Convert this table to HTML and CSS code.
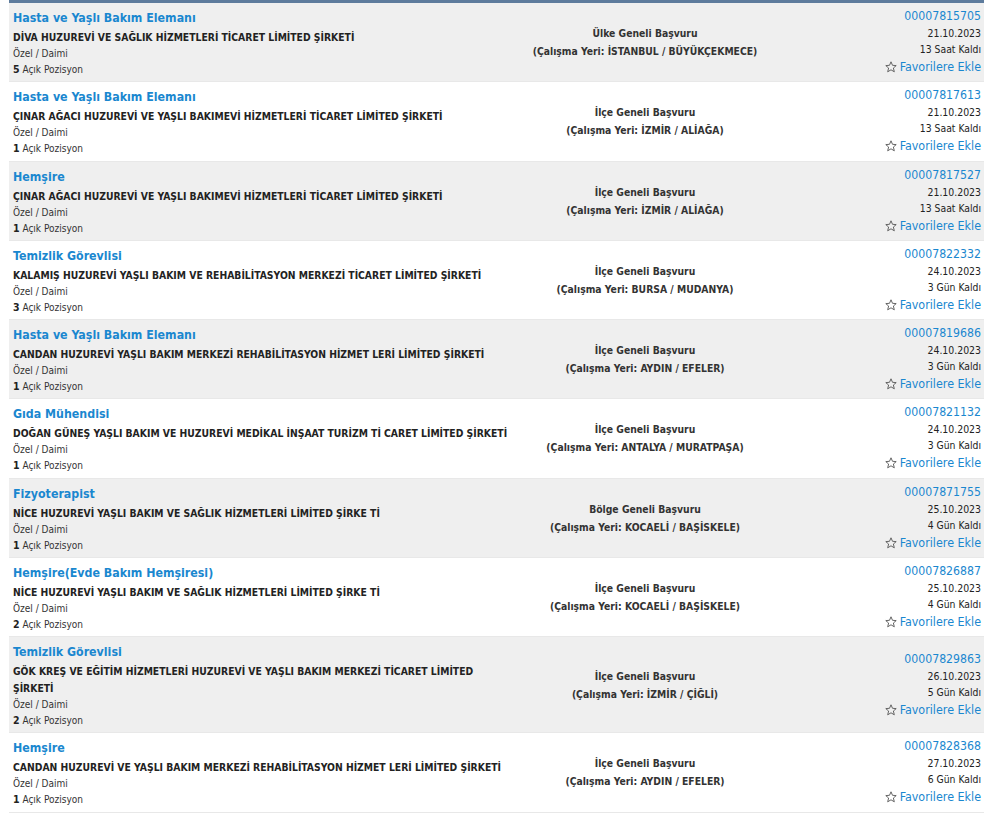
FILE: index.html
```html
<!DOCTYPE html>
<html lang="tr">
<head>
<meta charset="utf-8">
<title>İlanlar</title>
<link rel="stylesheet" href="styles.css">
</head>
<body>
<div class="list">
  <div class="row odd">
    <div class="c-left">
      <a class="title">Hasta ve Yaşlı Bakım Elemanı</a>
      <div class="company">DİVA HUZUREVİ VE SAĞLIK HİZMETLERİ TİCARET LİMİTED ŞİRKETİ</div>
      <div class="type">Özel / Daimi</div>
      <div class="pos"><b>5</b> Açık Pozisyon</div>
    </div>
    <div class="c-mid"><div>Ülke Geneli Başvuru</div><div>(Çalışma Yeri: İSTANBUL / BÜYÜKÇEKMECE)</div></div>
    <div class="c-right">
      <a class="no">00007815705</a>
      <div class="date">21.10.2023</div>
      <div class="left">13 Saat Kaldı</div>
      <a class="fav"><svg viewBox="0 0 12 12" class="star"><path d="M6 0.8 L7.5 4.3 L11.2 4.6 L8.4 7 L9.3 10.8 L6 8.8 L2.7 10.8 L3.6 7 L0.8 4.6 L4.5 4.3 Z"/></svg>Favorilere Ekle</a>
    </div>
  </div>
  <div class="row">
    <div class="c-left">
      <a class="title">Hasta ve Yaşlı Bakım Elemanı</a>
      <div class="company">ÇINAR AĞACI HUZUREVİ VE YAŞLI BAKIMEVİ HİZMETLERİ TİCARET LİMİTED ŞİRKETİ</div>
      <div class="type">Özel / Daimi</div>
      <div class="pos"><b>1</b> Açık Pozisyon</div>
    </div>
    <div class="c-mid"><div>İlçe Geneli Başvuru</div><div>(Çalışma Yeri: İZMİR / ALİAĞA)</div></div>
    <div class="c-right">
      <a class="no">00007817613</a>
      <div class="date">21.10.2023</div>
      <div class="left">13 Saat Kaldı</div>
      <a class="fav"><svg viewBox="0 0 12 12" class="star"><path d="M6 0.8 L7.5 4.3 L11.2 4.6 L8.4 7 L9.3 10.8 L6 8.8 L2.7 10.8 L3.6 7 L0.8 4.6 L4.5 4.3 Z"/></svg>Favorilere Ekle</a>
    </div>
  </div>
  <div class="row odd">
    <div class="c-left">
      <a class="title">Hemşire</a>
      <div class="company">ÇINAR AĞACI HUZUREVİ VE YAŞLI BAKIMEVİ HİZMETLERİ TİCARET LİMİTED ŞİRKETİ</div>
      <div class="type">Özel / Daimi</div>
      <div class="pos"><b>1</b> Açık Pozisyon</div>
    </div>
    <div class="c-mid"><div>İlçe Geneli Başvuru</div><div>(Çalışma Yeri: İZMİR / ALİAĞA)</div></div>
    <div class="c-right">
      <a class="no">00007817527</a>
      <div class="date">21.10.2023</div>
      <div class="left">13 Saat Kaldı</div>
      <a class="fav"><svg viewBox="0 0 12 12" class="star"><path d="M6 0.8 L7.5 4.3 L11.2 4.6 L8.4 7 L9.3 10.8 L6 8.8 L2.7 10.8 L3.6 7 L0.8 4.6 L4.5 4.3 Z"/></svg>Favorilere Ekle</a>
    </div>
  </div>
  <div class="row">
    <div class="c-left">
      <a class="title">Temizlik Görevlisi</a>
      <div class="company">KALAMIŞ HUZUREVİ YAŞLI BAKIM VE REHABİLİTASYON MERKEZİ TİCARET LİMİTED ŞİRKETİ</div>
      <div class="type">Özel / Daimi</div>
      <div class="pos"><b>3</b> Açık Pozisyon</div>
    </div>
    <div class="c-mid"><div>İlçe Geneli Başvuru</div><div>(Çalışma Yeri: BURSA / MUDANYA)</div></div>
    <div class="c-right">
      <a class="no">00007822332</a>
      <div class="date">24.10.2023</div>
      <div class="left">3 Gün Kaldı</div>
      <a class="fav"><svg viewBox="0 0 12 12" class="star"><path d="M6 0.8 L7.5 4.3 L11.2 4.6 L8.4 7 L9.3 10.8 L6 8.8 L2.7 10.8 L3.6 7 L0.8 4.6 L4.5 4.3 Z"/></svg>Favorilere Ekle</a>
    </div>
  </div>
  <div class="row odd">
    <div class="c-left">
      <a class="title">Hasta ve Yaşlı Bakım Elemanı</a>
      <div class="company">CANDAN HUZUREVİ YAŞLI BAKIM MERKEZİ REHABİLİTASYON HİZMET LERİ LİMİTED ŞİRKETİ</div>
      <div class="type">Özel / Daimi</div>
      <div class="pos"><b>1</b> Açık Pozisyon</div>
    </div>
    <div class="c-mid"><div>İlçe Geneli Başvuru</div><div>(Çalışma Yeri: AYDIN / EFELER)</div></div>
    <div class="c-right">
      <a class="no">00007819686</a>
      <div class="date">24.10.2023</div>
      <div class="left">3 Gün Kaldı</div>
      <a class="fav"><svg viewBox="0 0 12 12" class="star"><path d="M6 0.8 L7.5 4.3 L11.2 4.6 L8.4 7 L9.3 10.8 L6 8.8 L2.7 10.8 L3.6 7 L0.8 4.6 L4.5 4.3 Z"/></svg>Favorilere Ekle</a>
    </div>
  </div>
  <div class="row">
    <div class="c-left">
      <a class="title">Gıda Mühendisi</a>
      <div class="company">DOĞAN GÜNEŞ YAŞLI BAKIM VE HUZUREVİ MEDİKAL İNŞAAT TURİZM Tİ CARET LİMİTED ŞİRKETİ</div>
      <div class="type">Özel / Daimi</div>
      <div class="pos"><b>1</b> Açık Pozisyon</div>
    </div>
    <div class="c-mid"><div>İlçe Geneli Başvuru</div><div>(Çalışma Yeri: ANTALYA / MURATPAŞA)</div></div>
    <div class="c-right">
      <a class="no">00007821132</a>
      <div class="date">24.10.2023</div>
      <div class="left">3 Gün Kaldı</div>
      <a class="fav"><svg viewBox="0 0 12 12" class="star"><path d="M6 0.8 L7.5 4.3 L11.2 4.6 L8.4 7 L9.3 10.8 L6 8.8 L2.7 10.8 L3.6 7 L0.8 4.6 L4.5 4.3 Z"/></svg>Favorilere Ekle</a>
    </div>
  </div>
  <div class="row odd">
    <div class="c-left">
      <a class="title">Fizyoterapist</a>
      <div class="company">NİCE HUZUREVİ YAŞLI BAKIM VE SAĞLIK HİZMETLERİ LİMİTED ŞİRKE Tİ</div>
      <div class="type">Özel / Daimi</div>
      <div class="pos"><b>1</b> Açık Pozisyon</div>
    </div>
    <div class="c-mid"><div>Bölge Geneli Başvuru</div><div>(Çalışma Yeri: KOCAELİ / BAŞİSKELE)</div></div>
    <div class="c-right">
      <a class="no">00007871755</a>
      <div class="date">25.10.2023</div>
      <div class="left">4 Gün Kaldı</div>
      <a class="fav"><svg viewBox="0 0 12 12" class="star"><path d="M6 0.8 L7.5 4.3 L11.2 4.6 L8.4 7 L9.3 10.8 L6 8.8 L2.7 10.8 L3.6 7 L0.8 4.6 L4.5 4.3 Z"/></svg>Favorilere Ekle</a>
    </div>
  </div>
  <div class="row">
    <div class="c-left">
      <a class="title">Hemşire(Evde Bakım Hemşiresi)</a>
      <div class="company">NİCE HUZUREVİ YAŞLI BAKIM VE SAĞLIK HİZMETLERİ LİMİTED ŞİRKE Tİ</div>
      <div class="type">Özel / Daimi</div>
      <div class="pos"><b>2</b> Açık Pozisyon</div>
    </div>
    <div class="c-mid"><div>İlçe Geneli Başvuru</div><div>(Çalışma Yeri: KOCAELİ / BAŞİSKELE)</div></div>
    <div class="c-right">
      <a class="no">00007826887</a>
      <div class="date">25.10.2023</div>
      <div class="left">4 Gün Kaldı</div>
      <a class="fav"><svg viewBox="0 0 12 12" class="star"><path d="M6 0.8 L7.5 4.3 L11.2 4.6 L8.4 7 L9.3 10.8 L6 8.8 L2.7 10.8 L3.6 7 L0.8 4.6 L4.5 4.3 Z"/></svg>Favorilere Ekle</a>
    </div>
  </div>
  <div class="row odd">
    <div class="c-left">
      <a class="title">Temizlik Görevlisi</a>
      <div class="company">GÖK KREŞ VE EĞİTİM HİZMETLERİ HUZUREVİ VE YAŞLI BAKIM MERKEZİ TİCARET LİMİTED ŞİRKETİ</div>
      <div class="type">Özel / Daimi</div>
      <div class="pos"><b>2</b> Açık Pozisyon</div>
    </div>
    <div class="c-mid"><div>İlçe Geneli Başvuru</div><div>(Çalışma Yeri: İZMİR / ÇİĞLİ)</div></div>
    <div class="c-right">
      <a class="no">00007829863</a>
      <div class="date">26.10.2023</div>
      <div class="left">5 Gün Kaldı</div>
      <a class="fav"><svg viewBox="0 0 12 12" class="star"><path d="M6 0.8 L7.5 4.3 L11.2 4.6 L8.4 7 L9.3 10.8 L6 8.8 L2.7 10.8 L3.6 7 L0.8 4.6 L4.5 4.3 Z"/></svg>Favorilere Ekle</a>
    </div>
  </div>
  <div class="row">
    <div class="c-left">
      <a class="title">Hemşire</a>
      <div class="company">CANDAN HUZUREVİ VE YAŞLI BAKIM MERKEZİ REHABİLİTASYON HİZMET LERİ LİMİTED ŞİRKETİ</div>
      <div class="type">Özel / Daimi</div>
      <div class="pos"><b>1</b> Açık Pozisyon</div>
    </div>
    <div class="c-mid"><div>İlçe Geneli Başvuru</div><div>(Çalışma Yeri: AYDIN / EFELER)</div></div>
    <div class="c-right">
      <a class="no">00007828368</a>
      <div class="date">27.10.2023</div>
      <div class="left">6 Gün Kaldı</div>
      <a class="fav"><svg viewBox="0 0 12 12" class="star"><path d="M6 0.8 L7.5 4.3 L11.2 4.6 L8.4 7 L9.3 10.8 L6 8.8 L2.7 10.8 L3.6 7 L0.8 4.6 L4.5 4.3 Z"/></svg>Favorilere Ekle</a>
    </div>
  </div>
</div>
</body>
</html>
```

FILE: styles.css
```css
html, body {
  margin: 0;
  padding: 0;
  background: #ffffff;
}
body {
  font-family: "DejaVu Sans Condensed", "DejaVu Sans", sans-serif;
  color: #333;
}
.list {
  margin-left: 9px;
  width: 975px;
  border-top: 3px solid #5d7b9c;
}
.row {
  display: grid;
  grid-template-columns: 505px 1fr 208px;
  align-items: center;
  background: #ffffff;
  border-bottom: 1px solid #e8e8e8;
}
.row.odd {
  background: #efefef;
}
.c-left {
  padding: 4px 4px 3.25px 4px;
}
.title {
  display: block;
  color: #1a87cf;
  font-weight: bold;
  font-size: 12.3px;
  line-height: 22px;
}
.company {
  font-weight: bold;
  font-size: 10.3px;
  line-height: 17px;
  color: #222;
  max-width: 495px;
}
.type {
  font-size: 10px;
  line-height: 15px;
  color: #333;
}
.pos {
  font-size: 10px;
  line-height: 17px;
  color: #333;
}
.pos b {
  color: #222;
  font-size: 10.5px;
}
.c-mid {
  text-align: center;
  font-weight: bold;
  font-size: 10.3px;
  line-height: 18px;
  color: #333;
}
.c-right {
  text-align: right;
  padding-right: 3px;
  display: flex;
  flex-direction: column;
  align-items: flex-end;
}
.no {
  color: #1a87cf;
  font-size: 12.2px;
  line-height: 17px;
}
.date {
  font-size: 10.4px;
  line-height: 16px;
  color: #222;
}
.left {
  font-size: 10.3px;
  line-height: 17px;
  color: #222;
}
.fav {
  color: #1a87cf;
  font-size: 12.4px;
  line-height: 18px;
  display: flex;
  align-items: center;
}
.star {
  width: 12px;
  height: 12px;
  margin-right: 3px;
  fill: none;
  stroke: #555;
  stroke-width: 0.9;
  stroke-linejoin: round;
}
```
